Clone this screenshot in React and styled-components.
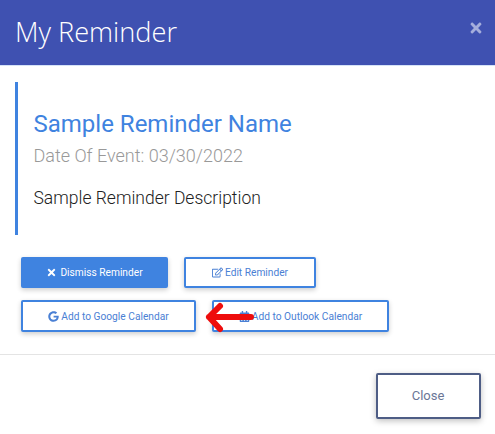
import React from 'react';
import styled, { createGlobalStyle } from 'styled-components';
import { FaTimes, FaRegEdit, FaGoogle, FaCalendarAlt } from 'react-icons/fa';

const GlobalStyle = createGlobalStyle`
  html, body {
    margin: 0;
    padding: 0;
    background: #fff;
    font-family: Roboto, "Liberation Sans", sans-serif;
  }
`;

const Modal = styled.div`
  position: relative;
  width: 495px;
  height: 434px;
  overflow: hidden;
  background: #fff;
`;

const Header = styled.header`
  height: 66px;
  box-sizing: border-box;
  padding: 0 11px 0 15px;
  display: flex;
  align-items: center;
  justify-content: space-between;
  background: #3f51b1;
  border-bottom: 1px solid #d5e3f7;
`;

const Title = styled.h1`
  margin: 0 0 3px;
  font-family: "Open Sans", sans-serif;
  font-size: 27.2px;
  font-weight: 300;
  color: #fff;
`;

const HeaderClose = styled.button`
  border: 0;
  padding: 0;
  margin: 0 0 10px 0;
  background: none;
  display: flex;
  color: #a5aedc;
  font-size: 16px;
`;

const Body = styled.section`
  padding: 16px 15px 0;
`;

const Callout = styled.div`
  height: 153px;
  box-sizing: border-box;
  padding: 26px 15.5px 0;
  border-left: 3px solid #3f83e0;
`;

const Name = styled.h2`
  margin: 0;
  font-size: 24px;
  line-height: 32px;
  font-weight: 400;
  color: #3f83e0;
`;

const EventDate = styled.div`
  margin-top: 4px;
  font-size: 18px;
  line-height: 24px;
  font-weight: 300;
  color: #999;
`;

const Description = styled.p`
  margin: 18px 0 0;
  font-size: 17.5px;
  line-height: 24px;
  font-weight: 300;
  color: #212121;
`;

const Actions = styled.div`
  margin-top: 22px;
  padding-left: 6px;
  display: flex;
  flex-direction: column;
  gap: 12px;
`;

const ActionRow = styled.div`
  display: flex;
  gap: 16px;
`;

const Action = styled.button`
  width: ${(p) => p.$width}px;
  height: ${(p) => p.$height}px;
  box-sizing: border-box;
  padding: 0;
  display: flex;
  align-items: center;
  justify-content: center;
  gap: ${(p) => p.$gap || 2}px;
  border: 2px solid #3f83e0;
  border-radius: 2px;
  background: ${(p) => (p.$solid ? '#3f83e0' : '#fff')};
  color: ${(p) => (p.$solid ? '#fff' : '#4a80d4')};
  font-family: inherit;
  font-size: 10.2px;
  font-weight: 400;
  box-shadow: 0 2px 5px rgba(0, 0, 0, 0.2);

  svg {
    font-size: 11px;
    flex: none;
  }
`;

const Divider = styled.hr`
  margin: 22px 0 0;
  border: 0;
  border-top: 1px solid #e4e4e4;
`;

const Footer = styled.footer`
  padding: 18px 14px 0;
  display: flex;
  justify-content: flex-end;
`;

const CloseButton = styled.button`
  width: 105px;
  height: 46px;
  box-sizing: border-box;
  padding: 0 1px 2px 0;
  border: 2px solid #4e5d85;
  border-radius: 2px;
  background: #fff;
  color: #6a7696;
  font-family: inherit;
  font-size: 13px;
  box-shadow: 0 2px 6px rgba(0, 0, 0, 0.25);
`;

const Arrow = styled.svg`
  position: absolute;
  left: 200px;
  top: 300px;
  width: 60px;
  height: 36px;
`;

export default function App() {
  return (
    <Modal>
      <GlobalStyle />
      <Header>
        <Title>My Reminder</Title>
        <HeaderClose aria-label="Close">
          <FaTimes />
        </HeaderClose>
      </Header>
      <Body>
        <Callout>
          <Name>Sample Reminder Name</Name>
          <EventDate>Date Of Event: 03/30/2022</EventDate>
          <Description>Sample Reminder Description</Description>
        </Callout>
        <Actions>
          <ActionRow>
            <Action $solid $width={147} $height={31} $gap={3}>
              <FaTimes />
              Dismiss Reminder
            </Action>
            <Action $width={132} $height={31}>
              <FaRegEdit />
              Edit Reminder
            </Action>
          </ActionRow>
          <ActionRow>
            <Action $width={175} $height={32}>
              <FaGoogle />
              Add to Google Calendar
            </Action>
            <Action $width={177} $height={32}>
              <FaCalendarAlt />
              Add to Outlook Calendar
            </Action>
          </ActionRow>
        </Actions>
      </Body>
      <Divider />
      <Footer>
        <CloseButton>Close</CloseButton>
      </Footer>
      <Arrow viewBox="0 0 60 36">
        <path
          d="M51 17 H9 M9 17 L20 6 M9 17 L20 29"
          fill="none"
          stroke="#ee0d0d"
          strokeWidth="6"
          strokeLinecap="round"
          strokeLinejoin="round"
        />
      </Arrow>
    </Modal>
  );
}
